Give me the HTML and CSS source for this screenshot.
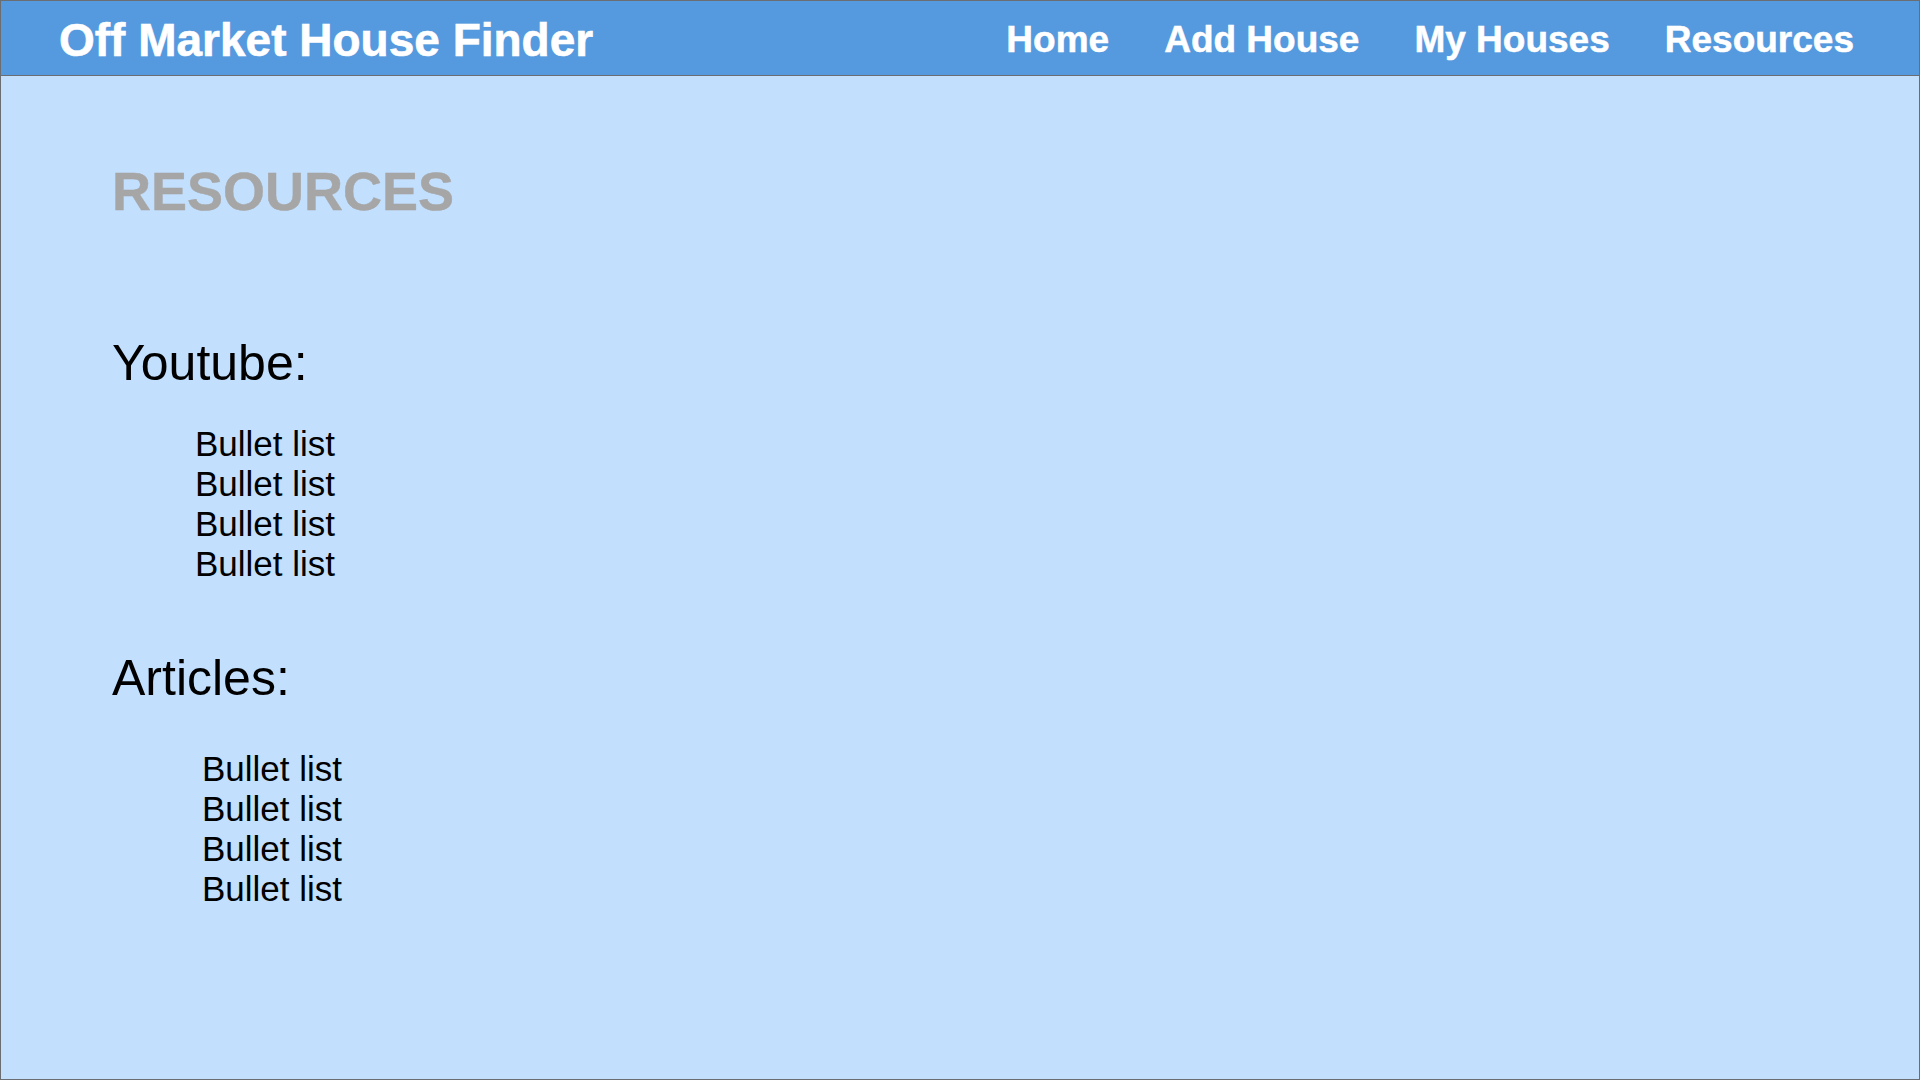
FILE: index.html
```html
<!DOCTYPE html>
<html lang="en">
<head>
<meta charset="utf-8">
<title>Off Market House Finder - Resources</title>
<link rel="stylesheet" href="styles.css">
</head>
<body>
<div class="page">
  <header class="topbar">
    <div class="brand">Off Market House Finder</div>
    <nav class="nav">
      <a class="nav-link" href="#">Home</a>
      <a class="nav-link" href="#">Add House</a>
      <a class="nav-link" href="#">My Houses</a>
      <a class="nav-link" href="#">Resources</a>
    </nav>
  </header>
  <main class="content">
    <h1 class="page-title">RESOURCES</h1>
    <section class="group group-youtube">
      <h2 class="group-title">Youtube:</h2>
      <ul class="links">
        <li>Bullet list</li>
        <li>Bullet list</li>
        <li>Bullet list</li>
        <li>Bullet list</li>
      </ul>
    </section>
    <section class="group group-articles">
      <h2 class="group-title">Articles:</h2>
      <ul class="links">
        <li>Bullet list</li>
        <li>Bullet list</li>
        <li>Bullet list</li>
        <li>Bullet list</li>
      </ul>
    </section>
  </main>
</div>
</body>
</html>
```
FILE: styles.css
```css
* { box-sizing: border-box; }
html, body {
  margin: 0;
  padding: 0;
  width: 1920px;
  height: 1080px;
  overflow: hidden;
}
body {
  font-family: "Liberation Sans", Arial, sans-serif;
  background: #c2e0fe;
}
.page {
  width: 1920px;
  height: 1080px;
  border: 1px solid #6a6e73;
  background: #c2e0fe;
  display: flex;
  flex-direction: column;
}
.topbar {
  height: 75px;
  flex: 0 0 75px;
  background: #559ade;
  border-bottom: 1px solid #6a6e73;
  display: flex;
  align-items: center;
  justify-content: space-between;
  padding: 0 65px 0 58px;
}
.brand {
  color: #ffffff;
  font-weight: bold;
  font-size: 46px;
  line-height: 1;
  margin-top: 4px;
  -webkit-text-stroke: 0.6px #ffffff;
}
.nav {
  display: flex;
  gap: 55px;
  margin-top: 2px;
}
.nav-link {
  color: #ffffff;
  font-weight: bold;
  font-size: 37px;
  line-height: 1;
  text-decoration: none;
  -webkit-text-stroke: 0.5px #ffffff;
}
.content {
  padding-left: 111px;
}
.page-title {
  margin: 88px 0 0 0;
  font-size: 54px;
  line-height: 54px;
  font-weight: bold;
  color: #a6a6a6;
  -webkit-text-stroke: 0.4px #a6a6a6;
}
.group-title {
  margin: 0;
  font-size: 50px;
  line-height: 50px;
  font-weight: normal;
  color: #000000;
}
.group-youtube { margin-top: 120px; }
.group-articles { margin-top: 69px; }
.links {
  list-style: none;
  margin: 0;
  padding: 0;
  font-size: 35px;
  line-height: 40px;
  color: #000000;
}
.group-youtube .links { margin-top: 36px; padding-left: 83px; }
.group-articles .links { margin-top: 46px; padding-left: 90px; }
```
